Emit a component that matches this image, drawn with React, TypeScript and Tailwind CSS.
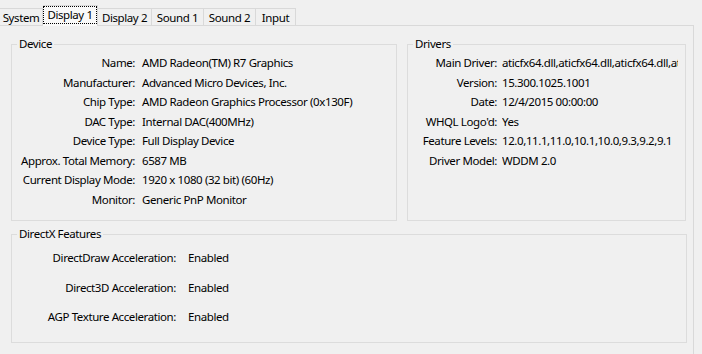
import type { ReactNode } from 'react';

const tabs = [
  { name: 'System', w: 'w-[43px]' },
  { name: 'Display 1', w: 'w-[55px]' },
  { name: 'Display 2', w: 'w-[54px]' },
  { name: 'Sound 1', w: 'w-[52px]' },
  { name: 'Sound 2', w: 'w-[52px]' },
  { name: 'Input', w: 'w-[40px]' },
];

const device: [string, string][] = [
  ['Name:', 'AMD Radeon(TM) R7 Graphics'],
  ['Manufacturer:', 'Advanced Micro Devices, Inc.'],
  ['Chip Type:', 'AMD Radeon Graphics Processor (0x130F)'],
  ['DAC Type:', 'Internal DAC(400MHz)'],
  ['Device Type:', 'Full Display Device'],
  ['Approx. Total Memory:', '6587 MB'],
  ['Current Display Mode:', '1920 x 1080 (32 bit) (60Hz)'],
  ['Monitor:', 'Generic PnP Monitor'],
];

const drivers: [string, string][] = [
  ['Main Driver:', 'aticfx64.dll,aticfx64.dll,aticfx64.dll,aticfx64.dll'],
  ['Version:', '15.300.1025.1001'],
  ['Date:', '12/4/2015 00:00:00'],
  ["WHQL Logo'd:", 'Yes'],
  ['Feature Levels:', '12.0,11.1,11.0,10.1,10.0,9.3,9.2,9.1'],
  ['Driver Model:', 'WDDM 2.0'],
];

const directx: [string, string][] = [
  ['DirectDraw Acceleration:', 'Enabled'],
  ['Direct3D Acceleration:', 'Enabled'],
  ['AGP Texture Acceleration:', 'Enabled'],
];

function Group({ title, className, children }: { title: string; className: string; children?: ReactNode }) {
  return (
    <fieldset className={`shrink-0 border border-[#dcdcdc] ${className}`}>
      <legend className="ml-[5px] px-[2px] leading-[16px]">{title}</legend>
      {children}
    </fieldset>
  );
}

export default function App() {
  return (
    <div className="h-[354px] w-[702px] overflow-hidden bg-[#f0f0f0] font-['Noto_Sans',sans-serif] text-[11.5px] tracking-[-0.4px] text-black">
      <div className="flex h-[25px] items-end">
        {tabs.map((t) => {
          const sel = t.name === 'Display 1';
          return (
            <div
              key={t.name}
              className={`${t.w} flex shrink-0 items-center justify-center border-t border-r border-[#d9d9d9] ${
                sel ? 'relative z-10 mb-[-1px] h-[21px] bg-[#f9f9f9] pb-[2px]' : 'h-[17px] bg-[#f0f0f0] pt-[1px]'
              }`}
            >
              {sel ? (
                <span className="flex h-[16px] w-[52px] items-center justify-center outline-1 outline-dotted outline-black">
                  {t.name}
                </span>
              ) : (
                t.name
              )}
            </div>
          );
        })}
      </div>
      <div className="w-[694px] border-t border-r border-[#d9d9d9] pt-[10px] pl-[11px]">
        <div className="flex gap-[10px]">
          <Group title="Device" className="h-[185px] w-[386px]">
            <div className="pt-px">
              {device.map(([k, v]) => (
                <div key={k} className="flex h-[19.5px] items-center whitespace-nowrap">
                  <span className="w-[123px] shrink-0 text-right">{k}</span>
                  <span className="pl-[7px]">{v}</span>
                </div>
              ))}
            </div>
          </Group>
          <Group title="Drivers" className="h-[185px] w-[279px]">
            <div className="pt-px">
              {drivers.map(([k, v]) => (
                <div key={k} className="flex h-[19.5px] items-center whitespace-nowrap">
                  <span className="w-[89px] shrink-0 text-right">{k}</span>
                  <span className="ml-[5px] w-[176px] overflow-hidden">{v}</span>
                </div>
              ))}
            </div>
          </Group>
        </div>
        <Group title="DirectX Features" className="mt-[5px] h-[117px] w-[676px]">
          <div className="pt-px">
            {directx.map(([k, v]) => (
              <div key={k} className="flex h-[29.5px] items-center whitespace-nowrap">
                <span className="w-[164px] shrink-0 text-right">{k}</span>
                <span className="pl-[12px]">{v}</span>
              </div>
            ))}
          </div>
        </Group>
        <Group title="Notes" className="mt-[9px] h-[60px] w-[676px]" />
      </div>
    </div>
  );
}
